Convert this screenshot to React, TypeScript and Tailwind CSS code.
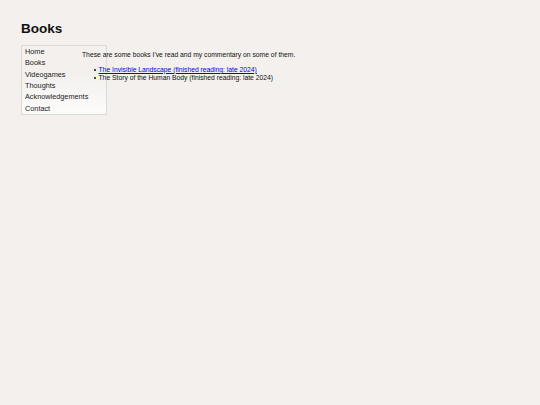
export default function App() {
  const nav = ["Home", "Books", "Videogames", "Thoughts", "Acknowledgements", "Contact"];
  const bullet = (
    <span className="absolute left-[-4.5px] top-[3.2px] h-[1.8px] w-[1.8px] rounded-full bg-[#111]" />
  );
  return (
    <div
      className="min-h-screen w-full bg-[#f3f0ed] text-black pl-[21px] pt-[20.6px]"
      style={{ fontFamily: '"Liberation Sans", Arial, sans-serif' }}
    >
      <h1 className="text-[13.5px] leading-[16px] font-bold text-[#111]">Books</h1>
      <div className="relative mt-[8.4px]">
        <nav className="absolute left-0 top-0 z-0 w-[86px] border border-[#dcd8d4] bg-gradient-to-b from-transparent from-40% to-[rgba(255,255,255,0.8)]">
          {nav.map((n) => (
            <div key={n} className="h-[11.35px] pl-[3px] text-[7.3px] leading-[11.35px] text-[#222]">
              {n}
            </div>
          ))}
        </nav>
        <main className="relative z-10 ml-[61px] pt-[6.4px] text-[6.75px] leading-[7.75px] text-[#111]">
          <p>These are some books I've read and my commentary on some of them.</p>
          <ul className="mt-[6.75px] pl-[16.5px]">
            <li className="relative">
              {bullet}
              <a href="#" className="text-[#0000ee] underline">
                The Invisible Landscape (finished reading: late 2024)
              </a>
            </li>
            <li className="relative">
              {bullet}
              The Story of the Human Body (finished reading: late 2024)
            </li>
          </ul>
        </main>
      </div>
    </div>
  );
}
